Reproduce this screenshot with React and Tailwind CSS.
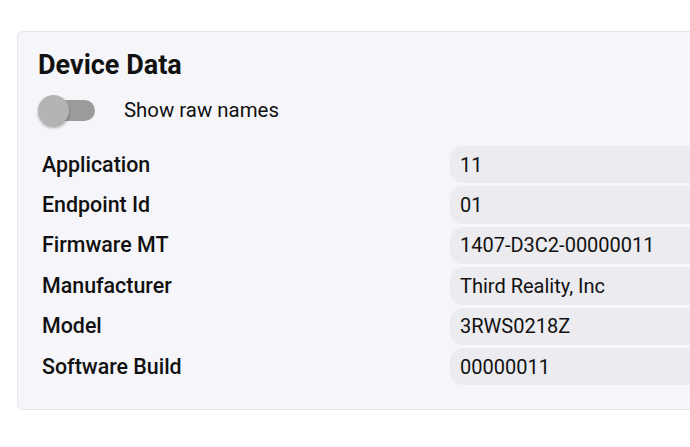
import React from 'react';

const rows = [
  ['Application', '11'],
  ['Endpoint Id', '01'],
  ['Firmware MT', '1407-D3C2-00000011'],
  ['Manufacturer', 'Third Reality, Inc'],
  ['Model', '3RWS0218Z'],
  ['Software Build', '00000011'],
];

const App = () => {
  return (
    <div className="w-[690px] h-[447px] overflow-hidden bg-white font-['Roboto',sans-serif] text-[#111]">
      <div className="ml-[17px] mt-[31px] w-[900px] h-[379px] rounded-md border border-[#e6e6ec] bg-[#f6f6fa] pl-[20px] pt-[16px]">
        <h2 className="text-[27px] leading-[34px] font-bold">Device Data</h2>
        <div className="flex items-center mt-[13px] h-[31px]">
          <div className="relative w-[58px] h-[31px]">
            <div className="absolute left-[4px] top-[5px] w-[53px] h-[21px] rounded-full bg-[#9b9b9b]" />
            <div className="absolute left-0 top-0 w-[31px] h-[31px] rounded-full bg-[#b4b4b4] shadow-[0_2px_3px_rgba(0,0,0,0.3)]" />
          </div>
          <span className="ml-[28px] text-[20.4px]">Show raw names</span>
        </div>
        <div className="grid grid-cols-[408px_1fr] gap-y-[3px] mt-[20px] ml-[4px]">
          {rows.map(([label, value]) => (
            <React.Fragment key={label}>
              <div className="h-[37.4px] flex items-center text-[21.4px] font-medium">{label}</div>
              <div className="h-[37.4px] flex items-center pl-[10px] rounded-l-[13px] bg-[#ebebf0] text-[20px]">{value}</div>
            </React.Fragment>
          ))}
        </div>
      </div>
    </div>
  );
};

export default App;
